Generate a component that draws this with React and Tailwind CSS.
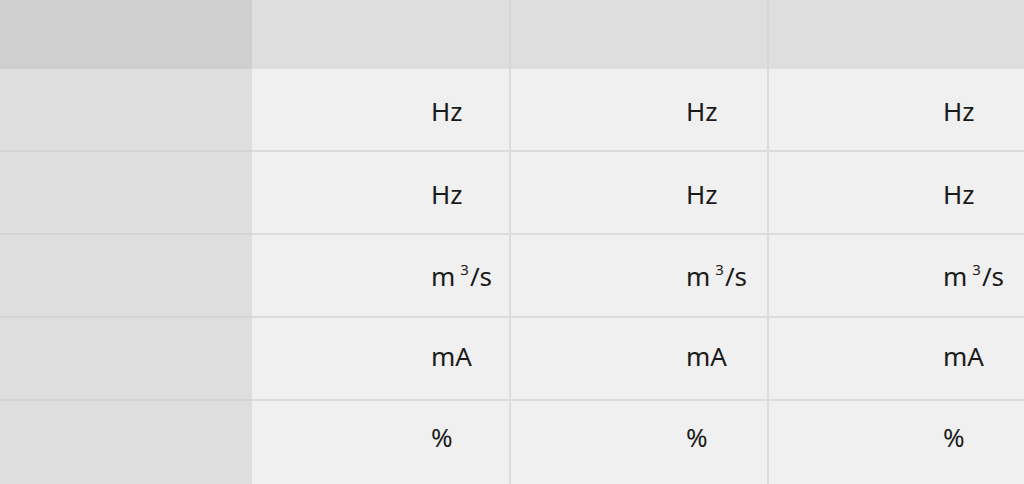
import React from 'react';

const rows = [
	{ unit: 'Hz', pad: 'pt-[2px]' },
	{ unit: 'Hz', pad: 'pt-[2px]' },
	{ unit: 'm3/s', pad: 'pt-[1px]' },
	{ unit: 'mA', pad: 'pb-[5px]' },
	{ unit: '%', pad: 'pb-[12px]' },
];

const Unit = ({ unit }) =>
	unit === 'm3/s' ? (
		<span className="leading-none">
			m<sup className="ml-[5px] mr-[1px] text-[15px] align-baseline relative -top-[11px]">3</sup>/s
		</span>
	) : (
		<span className="leading-none">{unit}</span>
	);

const App = () => (
	<div
		className="w-[1024px] h-[484px] overflow-hidden bg-[#f0f0f0] text-[#1b1b1b] text-[26px]"
		style={{ fontFamily: '"Noto Sans", "Open Sans", sans-serif' }}
	>
		<div className="w-[1300px]">
			<div className="flex h-[69px]">
				<div className="w-[252px] shrink-0 bg-[#cfcfcf]" />
				<div className="w-[259px] shrink-0 bg-[#dedede] border-r-2 border-[#d6d6d6]" />
				<div className="w-[258px] shrink-0 bg-[#dedede] border-r-2 border-[#d6d6d6]" />
				<div className="w-[258px] shrink-0 bg-[#dedede]" />
			</div>
			{rows.map((r, i) => {
				const last = i === rows.length - 1;
				return (
					<div
						key={i}
						className={last ? 'flex h-[83px]' : 'flex h-[83px] border-b-2 border-[#dcdcdc]'}
					>
						<div
							className={
								last
									? 'w-[252px] shrink-0 bg-[#dedede]'
									: 'w-[252px] shrink-0 bg-[#dedede] border-b-2 border-[#d4d4d4] -mb-[2px]'
							}
						/>
						<div className={`w-[259px] shrink-0 border-r-2 border-[#dcdcdc] flex items-center pl-[179px] ${r.pad}`}>
							<Unit unit={r.unit} />
						</div>
						<div className={`w-[258px] shrink-0 border-r-2 border-[#dcdcdc] flex items-center pl-[175px] ${r.pad}`}>
							<Unit unit={r.unit} />
						</div>
						<div className={`w-[258px] shrink-0 flex items-center pl-[174px] ${r.pad}`}>
							<Unit unit={r.unit} />
						</div>
					</div>
				);
			})}
		</div>
	</div>
);

export default App;
